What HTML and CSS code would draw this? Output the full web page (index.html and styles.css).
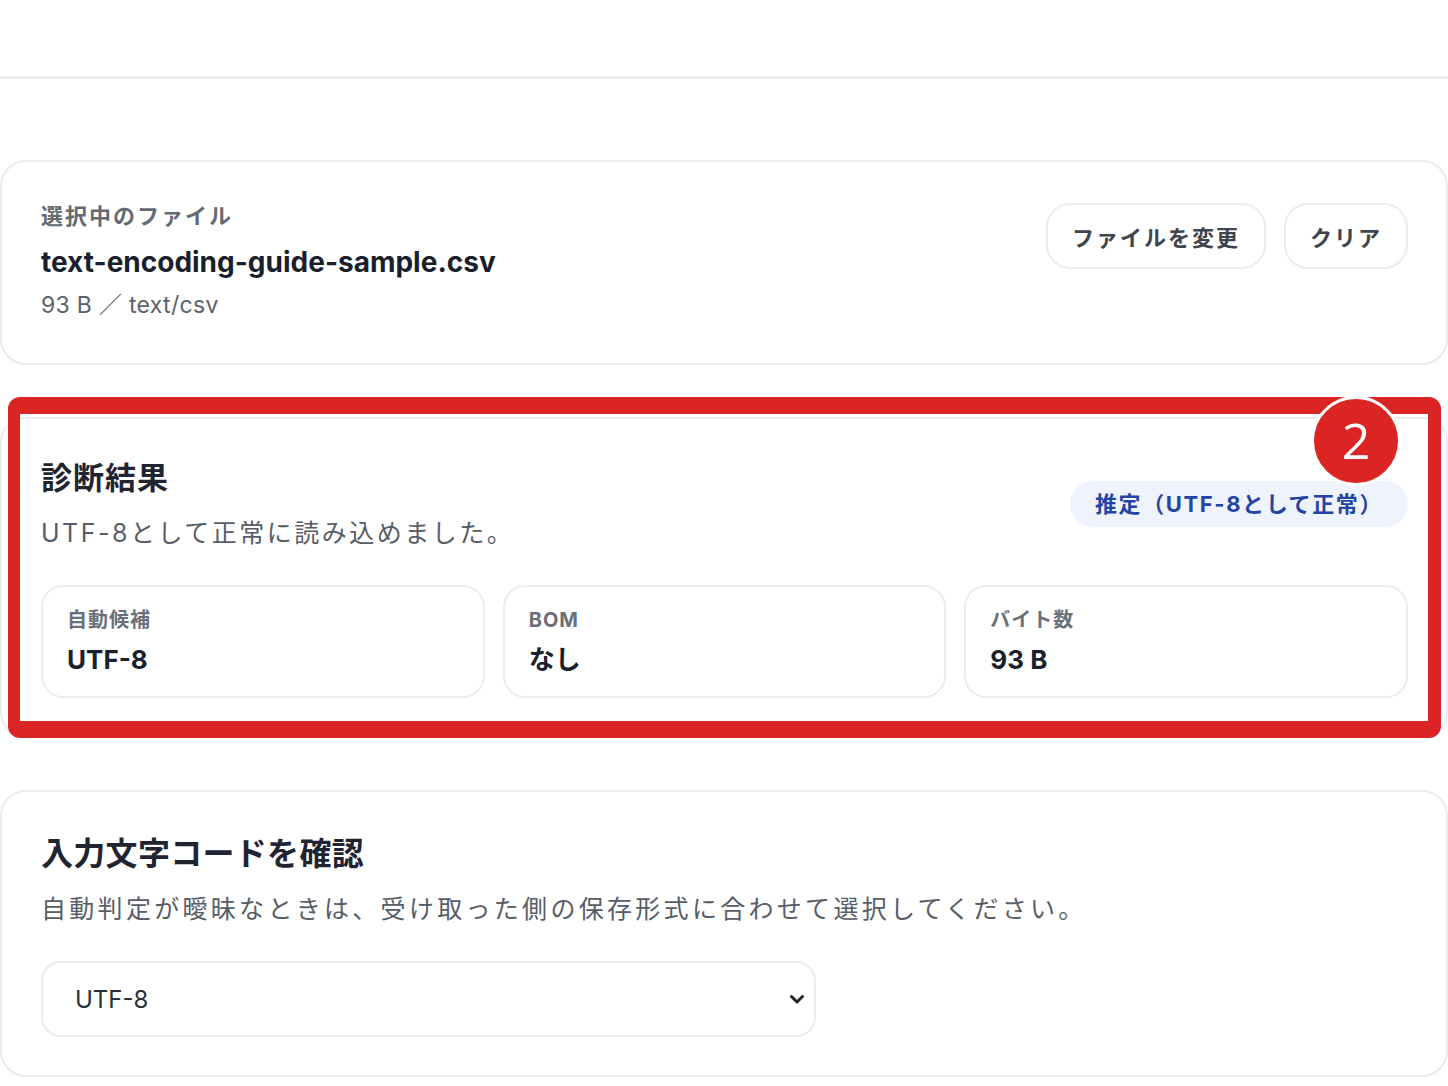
FILE: index.html
```html
<!DOCTYPE html>
<html lang="ja">
<head>
    <meta charset="UTF-8">
    <meta name="viewport" content="width=device-width, initial-scale=1.0">
    <title>文字コード診断</title>
    <link rel="stylesheet" href="styles.css">
</head>
<body>
    <header class="site-header"></header>

    <main class="page">
        <section class="card file-card">
            <div class="file-info">
                <p class="file-label">選択中のファイル</p>
                <p class="file-name">text-encoding-guide-sample.csv</p>
                <p class="file-meta">93 B ／ text/csv</p>
            </div>
            <div class="file-actions">
                <button class="button">ファイルを変更</button>
                <button class="button">クリア</button>
            </div>
        </section>

        <section class="card result-card">
            <div class="highlight"></div>
            <div class="step-badge">2</div>
            <div class="result-head">
                <div>
                    <h2 class="card-title">診断結果</h2>
                    <p class="card-text">UTF-8として正常に読み込めました。</p>
                </div>
                <span class="pill">推定（UTF-8として正常）</span>
            </div>
            <div class="stats">
                <div class="stat">
                    <p class="stat-label">自動候補</p>
                    <p class="stat-value">UTF-8</p>
                </div>
                <div class="stat">
                    <p class="stat-label">BOM</p>
                    <p class="stat-value">なし</p>
                </div>
                <div class="stat">
                    <p class="stat-label">バイト数</p>
                    <p class="stat-value">93 B</p>
                </div>
            </div>
        </section>

        <section class="card encoding-card">
            <h2 class="card-title">入力文字コードを確認</h2>
            <p class="card-text">自動判定が曖昧なときは、受け取った側の保存形式に合わせて選択してください。</p>
            <div class="select-wrap">
                <select class="select">
                    <option>UTF-8</option>
                    <option>Shift_JIS</option>
                    <option>EUC-JP</option>
                </select>
                <svg class="select-arrow" width="18" height="18" viewBox="0 0 18 18">
                    <path d="M3.5 6.5 L9 12 L14.5 6.5" fill="none" stroke="#1f2430" stroke-width="3" stroke-linecap="round" stroke-linejoin="round"/>
                </svg>
            </div>
        </section>
    </main>
</body>
</html>
```

FILE: styles.css
```css
* {
    box-sizing: border-box;
}
body {
    margin: 0;
    padding: 0;
    font-family: 'Inter', 'Noto Sans CJK JP', sans-serif;
    color: #1f2430;
    background: #fff;
    overflow-x: hidden;
}
p, h2 {
    margin: 0;
}
.site-header {
    height: 79px;
    border-bottom: 3px solid #ececec;
}
.page {
    display: flex;
    flex-direction: column;
    gap: 52px;
    padding-top: 81px;
    padding-bottom: 10px;
}
.card {
    width: 100%;
    border: 2px solid #ececec;
    border-radius: 26px;
    padding: 38px 38px 38px 39px;
    background: #fff;
}

/* file card */
.file-card {
    display: flex;
    justify-content: space-between;
    align-items: flex-start;
    padding-bottom: 41px;
}
.file-label {
    font-size: 22px;
    line-height: 33px;
    font-weight: 700;
    color: #646a74;
    letter-spacing: 2px;
}
.file-name {
    margin-top: 10px;
    font-size: 28px;
    line-height: 39px;
    font-weight: 700;
    color: #1a1f2b;
}
.file-meta {
    margin-top: 7px;
    font-size: 23px;
    line-height: 33px;
    color: #5c626c;
    letter-spacing: 0.3px;
}
.file-actions {
    display: flex;
    gap: 18px;
    margin-top: 3px;
}
.button {
    height: 66px;
    padding: 0 24px;
    font-family: inherit;
    font-size: 22px;
    font-weight: 700;
    letter-spacing: 2px;
    color: #3f444d;
    background: #fff;
    border: 2px solid #ececec;
    border-radius: 24px;
    cursor: pointer;
}

/* result card */
.result-card {
    position: relative;
}
.highlight {
    position: absolute;
    top: -22px;
    left: 6px;
    right: 5px;
    bottom: -2px;
    border: 14px solid #db2424;
    border-width: 17px 13px 17px 12px;
    border-radius: 12px;
    pointer-events: none;
}
.step-badge {
    position: absolute;
    top: -23px;
    right: 45px;
    width: 90px;
    height: 90px;
    border-radius: 50%;
    background: #db2424;
    border: 3px solid #fff;
    color: #fff;
    font-family: 'Open Sans', sans-serif;
    font-size: 50px;
    line-height: 82px;
    text-align: center;
}
.result-head {
    display: flex;
    justify-content: space-between;
    align-items: center;
}
.card-title {
    font-size: 31px;
    line-height: 42px;
    font-weight: 700;
    letter-spacing: 1px;
    color: #1f2430;
}
.card-text {
    margin-top: 16px;
    font-size: 25px;
    line-height: 36px;
    color: #575d67;
    letter-spacing: 2.5px;
}
.pill {
    padding: 0 25px;
    height: 46px;
    line-height: 46px;
    border-radius: 23px;
    background: #eef3fc;
    color: #2445a3;
    font-size: 22px;
    font-weight: 700;
    letter-spacing: 1.6px;
}
.stats {
    display: grid;
    grid-template-columns: repeat(3, 1fr);
    gap: 18px;
    margin-top: 34px;
}
.stat {
    border: 2px solid #ececec;
    border-radius: 22px;
    padding: 18px 24px;
}
.stat-label {
    font-size: 20px;
    line-height: 30px;
    font-weight: 700;
    color: #6a707a;
    letter-spacing: 1px;
}
.stat-value {
    margin-top: 7px;
    font-size: 26px;
    line-height: 36px;
    font-weight: 700;
    color: #1a1f2b;
}

/* encoding card */
.encoding-card {
    padding-top: 39px;
}
.encoding-card .card-title {
    font-size: 32px;
    line-height: 45px;
    letter-spacing: 0.3px;
}
.encoding-card .card-text {
    margin-top: 15px;
    letter-spacing: 3.3px;
}
.select-wrap {
    position: relative;
    width: 775px;
    margin-top: 34px;
}
.select {
    width: 100%;
    height: 76px;
    padding: 0 32px;
    font-family: inherit;
    font-size: 24px;
    color: #2a2f38;
    background: #fff;
    border: 2px solid #ececec;
    border-radius: 20px;
    appearance: none;
}
.select-arrow {
    position: absolute;
    right: 10px;
    top: 29px;
}
```
